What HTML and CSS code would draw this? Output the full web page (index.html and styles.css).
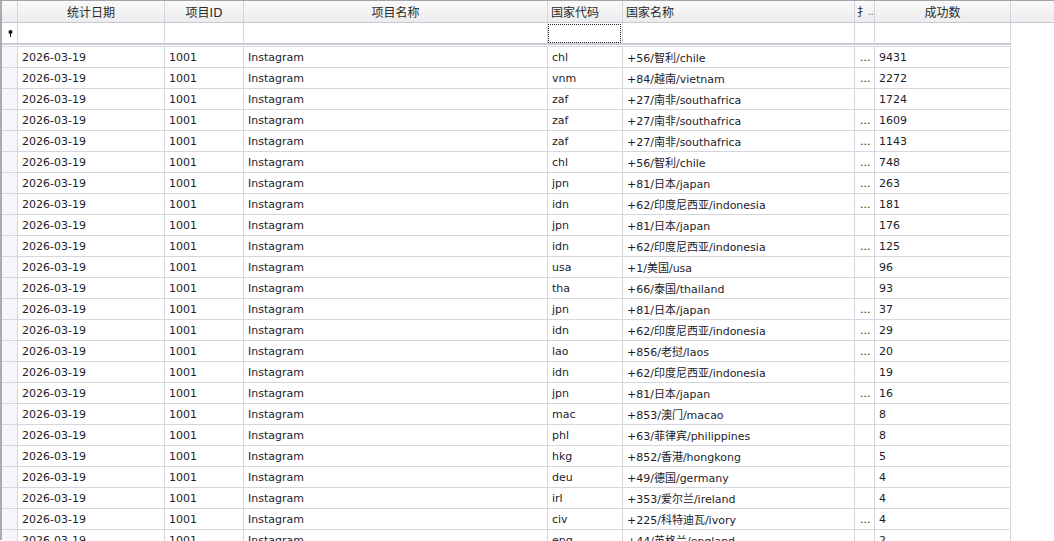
FILE: index.html
```html
<!DOCTYPE html>
<html lang="zh">
<head>
<meta charset="utf-8">
<title>Grid</title>
<link rel="stylesheet" href="styles.css">
</head>
<body>
<div class="grid">
  <div class="row head">
    <div class="cell ind"></div>
    <div class="cell c1 ctr">统计日期</div>
    <div class="cell c2 ctr">项目ID</div>
    <div class="cell c3 ctr">项目名称</div>
    <div class="cell c4">国家代码</div>
    <div class="cell c5">国家名称</div>
    <div class="cell c6 clip">扌<span class="dots">..</span></div>
    <div class="cell c7 ctr">成功数</div>
    <div class="cell rest"></div>
  </div>
  <div class="row filter">
    <div class="cell ind"><svg class="pin" width="5" height="7" viewBox="0 0 5 7"><circle cx="2.5" cy="2" r="2" fill="#111"/><rect x="2" y="3" width="1" height="4" fill="#111"/></svg></div>
    <div class="cell c1"></div>
    <div class="cell c2"></div>
    <div class="cell c3"></div>
    <div class="cell c4"><div class="focus"></div></div>
    <div class="cell c5"></div>
    <div class="cell c6"></div>
    <div class="cell c7"></div>
  </div>
  <div class="sep"></div>
  <div class="body" id="body"></div>
</div>
<script src="app.js"></script>
</body>
</html>
```

FILE: app.js
```js
const rows = [
  ["chl","+56/智利/chile",1,"9431"],
  ["vnm","+84/越南/vietnam",1,"2272"],
  ["zaf","+27/南非/southafrica",0,"1724"],
  ["zaf","+27/南非/southafrica",1,"1609"],
  ["zaf","+27/南非/southafrica",1,"1143"],
  ["chl","+56/智利/chile",1,"748"],
  ["jpn","+81/日本/japan",1,"263"],
  ["idn","+62/印度尼西亚/indonesia",1,"181"],
  ["jpn","+81/日本/japan",0,"176"],
  ["idn","+62/印度尼西亚/indonesia",1,"125"],
  ["usa","+1/美国/usa",0,"96"],
  ["tha","+66/泰国/thailand",0,"93"],
  ["jpn","+81/日本/japan",1,"37"],
  ["idn","+62/印度尼西亚/indonesia",1,"29"],
  ["lao","+856/老挝/laos",1,"20"],
  ["idn","+62/印度尼西亚/indonesia",0,"19"],
  ["jpn","+81/日本/japan",1,"16"],
  ["mac","+853/澳门/macao",0,"8"],
  ["phl","+63/菲律宾/philippines",0,"8"],
  ["hkg","+852/香港/hongkong",0,"5"],
  ["deu","+49/德国/germany",0,"4"],
  ["irl","+353/爱尔兰/ireland",0,"4"],
  ["civ","+225/科特迪瓦/ivory",1,"4"],
  ["eng","+44/英格兰/england",0,"2"]
];
const body = document.getElementById("body");
body.innerHTML = rows.map(r =>
  '<div class="row data">' +
  '<div class="cell ind"></div>' +
  '<div class="cell c1">2026-03-19</div>' +
  '<div class="cell c2">1001</div>' +
  '<div class="cell c3">Instagram</div>' +
  '<div class="cell c4">' + r[0] + '</div>' +
  '<div class="cell c5">' + r[1] + '</div>' +
  '<div class="cell c6 ell">' + (r[2] ? '...' : '') + '</div>' +
  '<div class="cell c7">' + r[3] + '</div>' +
  '</div>').join("");
```

FILE: styles.css
```css
html, body {
  margin: 0;
  padding: 0;
  background: #ffffff;
  overflow: hidden;
}
body {
  width: 1054px;
  height: 541px;
  font-family: "DejaVu Sans", "Noto Sans CJK SC", sans-serif;
  font-size: 11px;
  color: #1c1c2a;
}
.grid {
  border-top: 1px solid #a3a3a8;
  border-left: 2px solid #a9a9b2;
  height: 540px;
  box-sizing: border-box;
}
.row {
  display: grid;
  grid-template-columns: 16px 147px 79px 304px 75px 232px 20px 136px;
}
.cell {
  box-sizing: border-box;
  border-right: 1px solid #d6d6de;
  white-space: nowrap;
  overflow: hidden;
  padding-left: 4px;
  display: flex;
  align-items: center;
}
.ctr {
  justify-content: center;
  padding-left: 0;
}
.head {
  grid-template-columns: 16px 147px 79px 304px 75px 232px 20px 136px 1fr;
  height: 22px;
  background: linear-gradient(#fafafa, #ececee);
  border-bottom: 1px solid #c9c9cf;
  box-sizing: border-box;
  font-size: 12px;
  color: #2a2a2a;
}
.head .cell {
  border-right-color: #d2d2d8;
  padding-bottom: 1px;
}
.head .c4, .head .c5 {
  padding-left: 3px;
}
.head .rest {
  border-right: 0;
}
.head .clip {
  padding-left: 2px;
  font-size: 11px;
}
.dots {
  color: #b07020;
  letter-spacing: -1px;
}
.filter {
  height: 20px;
  width: 1009px;
}
.filter .ind {
  padding-left: 6px;
}
.pin {
  display: block;
}
.filter .c4 {
  padding: 1px 1px 0 0;
  align-items: stretch;
}
.focus {
  flex: 1;
  border: 1px dotted #222;
}
.sep {
  width: 1009px;
  height: 4px;
  box-sizing: border-box;
  border-top: 2px solid #cacad2;
  border-bottom: 1px solid #d6d6de;
}
.data {
  height: 21px;
  width: 1009px;
  box-sizing: border-box;
  border-bottom: 1px solid #d6d6de;
}
.data .ind {
  background: #f6f6f8;
}
.ell {
  padding-left: 5px;
  letter-spacing: 0;
}
```
